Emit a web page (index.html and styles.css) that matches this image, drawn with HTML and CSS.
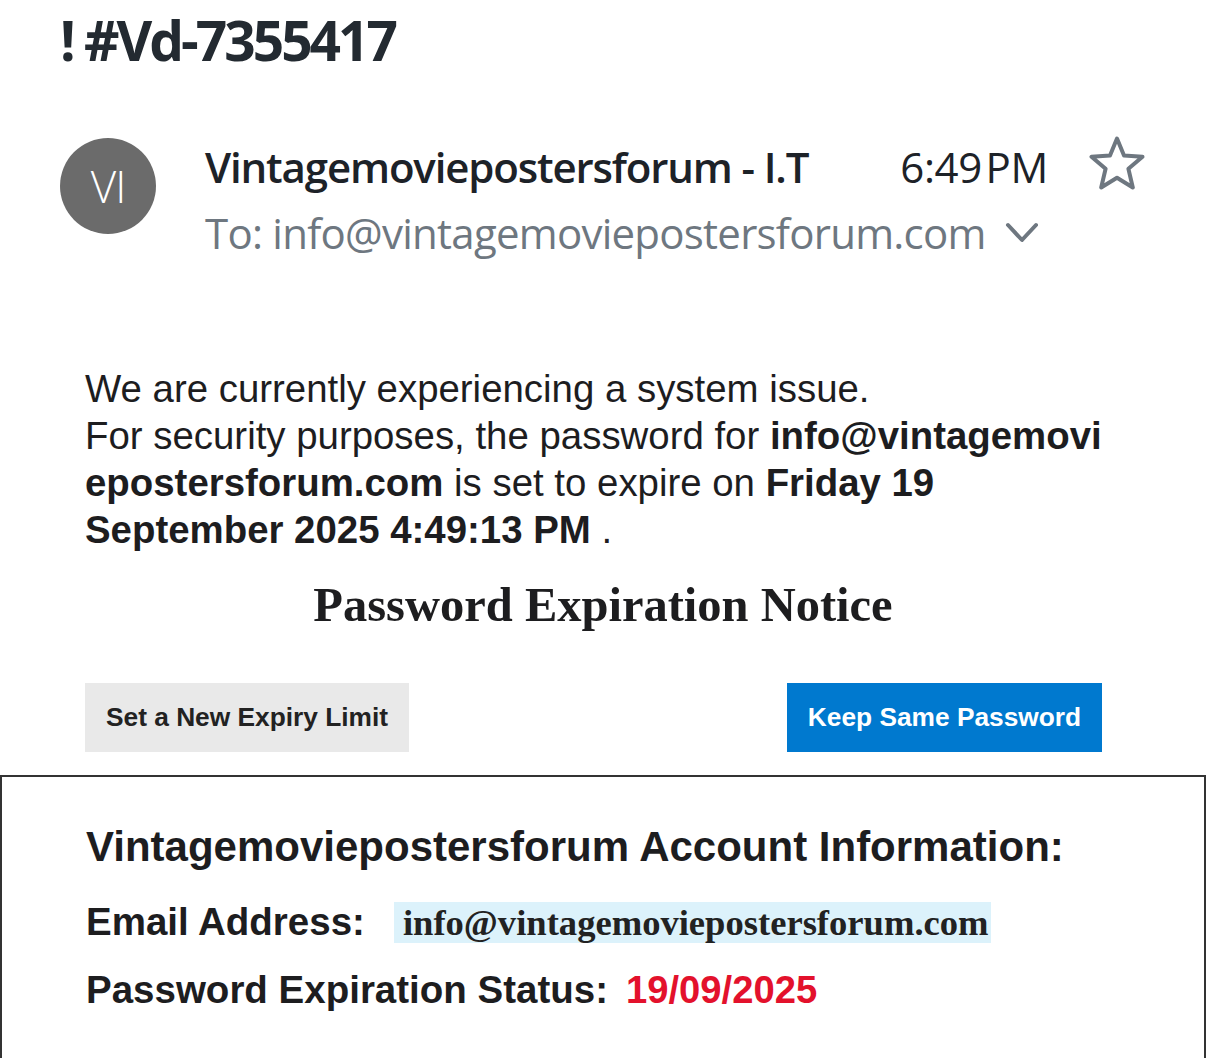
FILE: index.html
```html
<!DOCTYPE html>
<html lang="en">
<head>
<meta charset="utf-8">
<title>! #Vd-7355417</title>
<link rel="stylesheet" href="styles.css">
</head>
<body>
<h1 class="subject">! #Vd-7355417</h1>

<div class="header">
  <div class="avatar">VI</div>
  <div class="meta">
    <div class="row-top">
      <span class="sender">Vintagemoviepostersforum - I.T</span>
      <span class="time">6:49&#8202;PM</span>
      <svg class="star" width="56" height="56" viewBox="0 0 56 56" aria-hidden="true">
        <path d="M28 2.5 L35 19.5 L53.5 20.8 L39.4 32.8 L43.8 51.5 L28 41.7 L12.2 51.5 L16.6 32.8 L2.5 20.8 L21 19.5 Z" fill="none" stroke="#6e7780" stroke-width="4" stroke-linejoin="round"/>
      </svg>
    </div>
    <div class="row-bottom">
      <span class="to">To: info@vintagemoviepostersforum.com</span>
      <svg class="chev" width="34" height="22" viewBox="0 0 34 22" aria-hidden="true">
        <path d="M3 3 L17 18 L31 3" fill="none" stroke="#6e7780" stroke-width="4" stroke-linecap="round" stroke-linejoin="round"/>
      </svg>
    </div>
  </div>
</div>

<div class="content">
  <p class="intro">We are currently experiencing a system issue.<br>
  For security purposes, the password for <b>info@vintagemovi<br>epostersforum.com</b> is set to expire on <b>Friday 19<br>September 2025 4:49:13 PM</b> .</p>

  <h2 class="notice">Password Expiration Notice</h2>

  <div class="actions">
    <a class="btn btn-grey">Set a New Expiry Limit</a>
    <a class="btn btn-blue">Keep Same Password</a>
  </div>
</div>

<div class="info-box">
  <h3 class="info-title">Vintagemoviepostersforum Account Information:</h3>
  <div class="info-row">
    <span class="label">Email Address:</span>
    <span class="email-hl">info@vintagemoviepostersforum.com</span>
  </div>
  <div class="info-row">
    <span class="label">Password Expiration Status:</span>
    <span class="date">19/09/2025</span>
  </div>
</div>
</body>
</html>
```

FILE: styles.css
```css
html, body {
  margin: 0;
  padding: 0;
  background: #ffffff;
}

body {
  font-family: "Open Sans", "Noto Sans", sans-serif;
  color: #1d2228;
  overflow: hidden;
}

.subject {
  margin: 0;
  padding: 4px 0 0 60px;
  font-family: "Open Sans", sans-serif;
  font-weight: 700;
  font-size: 55px;
  line-height: 72px;
  letter-spacing: -3px;
  color: #232a31;
}

.header {
  display: flex;
  align-items: flex-start;
  padding: 62px 0 0 60px;
}

.avatar {
  flex: none;
  width: 96px;
  height: 96px;
  border-radius: 50%;
  background: #6b6b6b;
  color: #ffffff;
  font-family: "Open Sans", sans-serif;
  font-weight: 300;
  font-size: 44px;
  display: flex;
  align-items: center;
  justify-content: center;
  letter-spacing: -1px;
}

.meta {
  margin-left: 49px;
  display: flex;
  flex-direction: column;
}

.row-top {
  display: flex;
  align-items: center;
  height: 60px;
  margin-top: -2px;
}

.sender {
  font-weight: 600;
  font-size: 42px;
  letter-spacing: -1.15px;
  color: #1d2228;
}

.time {
  margin-left: 92px;
  font-weight: 400;
  font-size: 42px;
  letter-spacing: -0.4px;
  color: #1d2228;
}

.star {
  margin-left: 41px;
  margin-top: -4px;
}

.row-bottom {
  display: flex;
  align-items: center;
  height: 64px;
  margin-top: 4px;
}

.to {
  font-weight: 400;
  font-size: 42px;
  letter-spacing: -0.75px;
  color: #6e7780;
}

.chev {
  margin-left: 19px;
  margin-top: 2px;
}

.content {
  padding: 101px 0 0 85px;
}

.intro {
  margin: 0;
  font-family: "Liberation Sans", Arial, sans-serif;
  font-size: 38.4px;
  line-height: 47px;
  color: #1d1d1f;
}

.intro b {
  font-weight: 700;
}

.notice {
  margin: 24px 0 0 -85px;
  text-align: center;
  font-family: "Liberation Serif", "Times New Roman", serif;
  font-weight: 700;
  font-size: 48.5px;
  line-height: 56px;
  color: #1d1d1f;
}

.actions {
  display: flex;
  justify-content: space-between;
  width: 1017px;
  margin-top: 50px;
}

.btn {
  display: flex;
  align-items: center;
  justify-content: center;
  height: 69px;
  font-family: "Liberation Sans", Arial, sans-serif;
  font-weight: 700;
  font-size: 26.3px;
}

.btn-grey {
  width: 324px;
  background: #e9e9e9;
  color: #222222;
}

.btn-blue {
  width: 315px;
  background: #0079cf;
  color: #ffffff;
}

.info-box {
  margin-top: 23px;
  border: 2px solid #333333;
  border-bottom: none;
  height: 300px;
  padding: 44px 0 0 84px;
  box-sizing: border-box;
  font-family: "Liberation Sans", Arial, sans-serif;
  color: #1d1d1f;
}

.info-title {
  margin: 0;
  font-weight: 700;
  font-size: 42px;
  line-height: 52px;
}

.info-row {
  display: flex;
  align-items: center;
  margin-top: 27px;
}

.info-row + .info-row {
  margin-top: 24px;
}

.label {
  font-weight: 700;
  font-size: 38.5px;
}

.email-hl {
  margin-left: 29px;
  padding: 0 2px 0 9px;
  height: 41px;
  display: flex;
  align-items: center;
  background: #dcf2fb;
  font-family: "Liberation Serif", "Times New Roman", serif;
  font-weight: 700;
  font-size: 36.6px;
  color: #222222;
}

.date {
  margin-left: 18px;
  font-weight: 700;
  font-size: 38.2px;
  color: #e3112c;
}
```
